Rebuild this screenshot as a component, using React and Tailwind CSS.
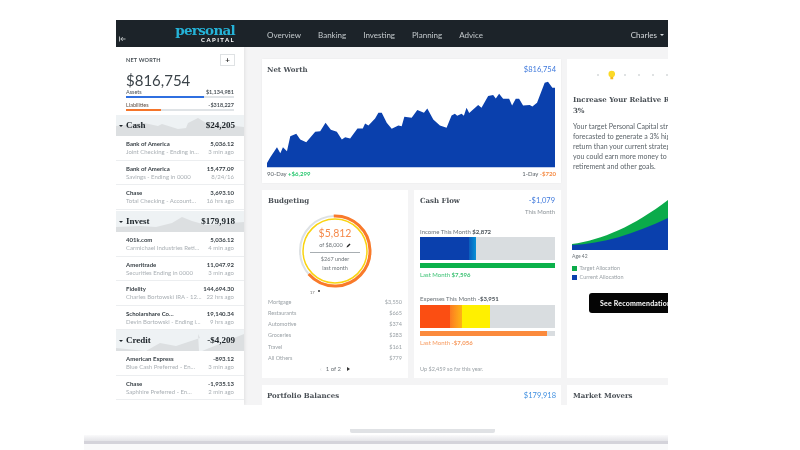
const SANS = { fontFamily: 'Lato, "Open Sans", sans-serif' };
const SLAB = { fontFamily: '"DejaVu Serif", serif' };
const SERIF = { fontFamily: '"Liberation Serif", serif' };

const nwPts = "20,338 20,325 30,308 50,278 60,296 68,278 80,290 90,245 108,238 120,255 138,263 165,232 180,230 196,205 212,226 230,232 245,255 255,248 270,252 292,222 308,222 315,207 325,213 345,192 355,175 365,175 380,205 395,223 415,213 425,215 433,187 455,190 472,167 492,175 502,162 520,195 540,213 560,220 575,183 585,178 592,184 605,178 612,184 620,160 628,176 655,152 665,160 685,125 700,122 708,132 718,118 730,133 748,133 757,153 768,133 778,133 790,153 810,152 818,156 832,145 855,85 865,82 878,100 886,100 886,338";

function Row({ name, sub, amt, when }) {
  return (
    <div className="h-[24.5px] shrink-0 border-b border-[#eceef0] px-[10px] pt-[4px] bg-white">
      <div className="flex justify-between text-[6px] leading-[8px] font-bold text-[#3a4248]">
        <span>{name}</span><span>{amt}</span>
      </div>
      <div className="flex justify-between text-[6px] leading-[8px] text-[#a9afb4]">
        <span>{sub}</span><span>{when}</span>
      </div>
    </div>
  );
}

function Band({ label, amt, points }) {
  return (
    <div className="relative h-[21px] shrink-0 bg-[#eef2f4] flex items-center justify-between pl-[3px] pr-[9px] overflow-hidden">
      <svg className="absolute inset-0 w-full h-full" viewBox="0 0 128 21" preserveAspectRatio="none">
        <polygon points={points} fill="#dcdfe1" />
      </svg>
      <span className="relative flex items-center text-[9px] font-bold text-[#20272c]" style={SERIF}>
        <span className="w-0 h-0 border-l-[2px] border-r-[2px] border-t-[2px] border-l-transparent border-r-transparent border-t-[#20272c] mr-[3px]"></span>
        {label}
      </span>
      <span className="relative text-[9px] font-bold text-[#20272c]" style={SERIF}>{amt}</span>
    </div>
  );
}

function Sidebar() {
  return (
    <div className="w-[128px] shrink-0 bg-white shadow-[1px_0_3px_rgba(0,0,0,0.08)] overflow-hidden flex flex-col">
      <div className="h-[68px] shrink-0 px-[10px] pt-[7px] relative">
        <div className="flex justify-between items-start">
          <span className="text-[5.5px] leading-[12px] font-bold tracking-[0.2px] text-[#4a5258]">NET WORTH</span>
          <span className="w-[15px] h-[12px] border border-[#dfe2e4] flex items-center justify-center text-[8px] leading-none font-bold text-[#333] -mr-[1px]">+</span>
        </div>
        <div className="text-[15px] leading-[18px] mt-[5px] text-[#3b4349]">$816,754</div>
        <div className="flex justify-between text-[5.5px] leading-[7px] text-[#4a5258]">
          <span>Assets</span><span className="font-bold">$1,134,981</span>
        </div>
        <div className="h-[1.5px] bg-[#dfe3e6] mb-[4.5px]"><div className="h-[1.5px] w-[78px] bg-[#2f6fe0]"></div></div>
        <div className="flex justify-between text-[5.5px] leading-[7px] text-[#5a4a40]">
          <span>Liabilities</span><span className="font-bold text-[#4a5258]">-$318,227</span>
        </div>
        <div className="h-[1.5px] bg-[#dfe3e6]"><div className="h-[1.5px] w-[35px] bg-[#f5752a]"></div></div>
      </div>
      <Band label="Cash" amt="$24,205" points="0,21 0,11 28,8 42,11 46,9 62,14 70,13 72,8 82,3 90,8 128,12 128,21" />
      <Row name="Bank of America" sub="Joint Checking - Ending in…" amt="5,036.12" when="3 min ago" />
      <Row name="Bank of America" sub="Savings - Ending in 0000" amt="15,477.09" when="8/24/16" />
      <Row name="Chase" sub="Total Checking - Account…" amt="3,693.10" when="16 hrs ago" />
      <div className="h-[1.5px] shrink-0 bg-white"></div>
      <Band label="Invest" amt="$179,918" points="0,21 0,16 24,15 40,16 56,12 66,6 76,10 90,14 128,11 128,21" />
      <Row name="401k.com" sub="Carmichael Industries Reti…" amt="5,036.12" when="4 min ago" />
      <Row name="Ameritrade" sub="Securities Ending in 0000" amt="11,047.92" when="3 min ago" />
      <Row name="Fidelity" sub="Charles Bortowski IRA - 12…" amt="144,694.30" when="22 hrs ago" />
      <Row name="Scholarshare Co…" sub="Devin Bortowski - Ending i…" amt="19,140.34" when="9 hrs ago" />
      <Band label="Credit" amt="-$4,209" points="0,21 0,18 30,21 44,13 60,16 84,8 82,4 83,21 86,21 128,4 128,21" />
      <Row name="American Express" sub="Blue Cash Preferred - En…" amt="-893.12" when="3 min ago" />
      <Row name="Chase" sub="Saphhire Preferred - En…" amt="-1,935.13" when="2 min ago" />
    </div>
  );
}

function NetWorth() {
  return (
    <div className="h-[124px] shrink-0 bg-white px-[5px] pt-[5px] shadow-[0_0_2px_rgba(0,0,0,0.05)]">
      <div className="flex justify-between items-start">
        <span className="text-[7px] leading-[12px] font-bold text-[#4a5056]" style={SLAB}>Net Worth</span>
        <span className="text-[7.5px] leading-[12px] text-[#3f79dc]">$816,754</span>
      </div>
      <svg className="block w-[288px] h-[87px] mt-[5px]" viewBox="20 80 866 260" preserveAspectRatio="none">
        <polygon points={nwPts} fill="#0a40ad" />
      </svg>
      <div className="flex justify-between text-[6px] leading-[8px] mt-[2px] text-[#5b6369]">
        <span>90-Day <span className="font-bold text-[#28c76f]">+$6,299</span></span>
        <span>1-Day <span className="font-bold text-[#f58a42]">-$720</span></span>
      </div>
    </div>
  );
}

function Ring() {
  const c = 2 * Math.PI;
  return (
    <div className="relative w-[74px] h-[74px] mx-auto">
      <svg className="absolute inset-0" width="74" height="74" viewBox="0 0 74 74">
        <circle cx="37" cy="37" r="35" fill="none" stroke="#dde1e4" strokeWidth="2" />
        <circle cx="37" cy="37" r="35" fill="none" stroke="#f97a2a" strokeWidth="3"
          strokeDasharray={`${c * 35 * 0.64} ${c * 35}`} transform="rotate(-92 37 37)" />
        <circle cx="37" cy="37" r="32" fill="none" stroke="#f9d30f" strokeWidth="1.5" />
      </svg>
      <div className="absolute inset-0 flex flex-col items-center pt-[13px]">
        <span className="text-[10.5px] leading-[13px] text-[#f5894a]">$5,812</span>
        <span className="flex items-center text-[5.5px] leading-[8px] text-[#6c7378] mt-[1px]">
          of $8,000
          <svg className="ml-[3px]" width="5" height="5" viewBox="0 0 5 5"><path d="M0.5 4.5 L1 3 L3.5 0.5 L4.5 1.5 L2 4 Z" fill="#222" /></svg>
        </span>
        <span className="w-[50px] h-[1px] bg-[#a8aeb2] mt-[3px]"></span>
        <span className="text-[5.5px] leading-[9px] text-[#6c7378] mt-[2px] text-center">$267 under<br />last month</span>
      </div>
    </div>
  );
}

function Budgeting() {
  const rows = [["Mortgage", "$3,550"], ["Restaurants", "$665"], ["Automotive", "$374"], ["Groceries", "$283"], ["Travel", "$161"], ["All Others", "$779"]];
  return (
    <div className="w-[146px] h-[188px] bg-white px-[6px] pt-[5px]">
      <div className="text-[7px] leading-[12px] font-bold text-[#4a5056]" style={SLAB}>Budgeting</div>
      <div className="mt-[7px]"><Ring /></div>
      <div className="flex items-center pl-[42px] h-[7px] text-[4px] text-[#666] mt-[1px]">
        <span>17</span><span className="w-[2px] h-[2px] bg-[#333] rounded-full ml-[3px] -mt-[3px]"></span>
      </div>
      <div>
        {rows.map(([a, b]) => (
          <div key={a} className="flex justify-between h-[11.3px] items-center text-[5.5px] text-[#9aa1a6]">
            <span>{a}</span><span>{b}</span>
          </div>
        ))}
      </div>
      <div className="flex justify-center items-center gap-[4px] text-[6px] leading-[10px] text-[#6c7378]">
        <span className="text-[#d0d3d6]">‹</span><span>1 of 2</span>
        <span className="w-0 h-0 border-t-[2px] border-b-[2px] border-l-[3px] border-t-transparent border-b-transparent border-l-[#333] ml-[2px]"></span>
      </div>
    </div>
  );
}

function Bar({ children, bg = "bg-[#d9dde0]" }) {
  return <div className={`flex h-[23px] ${bg}`}>{children}</div>;
}

function CashFlow() {
  return (
    <div className="w-[147px] h-[188px] bg-white pl-[6px] pr-[6px] pt-[5px]">
      <div className="flex justify-between">
        <span className="text-[7px] leading-[12px] font-bold text-[#4a5056]" style={SLAB}>Cash Flow</span>
        <span className="text-[7.5px] leading-[12px] text-[#3f79dc]">-$1,079</span>
      </div>
      <div className="text-right text-[6px] leading-[8px] text-[#8c9398] mt-[1px]">This Month</div>
      <div className="text-[6px] leading-[8px] text-[#6c7378] mt-[12px]">Income This Month <b className="text-[#4a5258]">$2,872</b></div>
      <div className="mt-[1px]">
        <Bar>
          <div className="w-[49px] bg-[#0a40ad]"></div>
          <div className="w-[7px] bg-gradient-to-r from-[#0a5cbc] to-[#0a90d6]"></div>
        </Bar>
      </div>
      <div className="h-[5px] bg-[#0bb14a] mt-[3px]"></div>
      <div className="text-[6px] leading-[8px] text-[#3cc274] mt-[3px]">Last Month <b>$7,596</b></div>
      <div className="text-[6px] leading-[8px] text-[#6c7378] mt-[16px]">Expenses This Month <b className="text-[#4a5258]">-$3,951</b></div>
      <div className="mt-[2px]">
        <Bar>
          <div className="w-[30px] bg-[#fb4e12]"></div>
          <div className="w-[12px] bg-gradient-to-r from-[#fb7a20] to-[#fdb414]"></div>
          <div className="w-[28px] bg-[#fff000]"></div>
        </Bar>
      </div>
      <div className="h-[5px] bg-[#d9dde0] mt-[3px]"><div className="h-[5px] w-[127px] bg-[#fb8a3c]"></div></div>
      <div className="text-[6px] leading-[8px] text-[#f79a5e] mt-[3px]">Last Month <b>-$7,056</b></div>
      <div className="text-[5.5px] leading-[8px] text-[#9aa1a6] mt-[18px]">Up $2,459 so far this year.</div>
    </div>
  );
}

function Advice() {
  return (
    <div className="h-[319px] shrink-0 bg-white pt-[11px] pl-[6px] overflow-hidden whitespace-nowrap">
      <div className="flex items-center h-[10px] pl-[24px] gap-[12px]">
        <span className="w-[2px] h-[2px] rounded-full bg-[#d5d8da]"></span>
        <svg width="8" height="10" viewBox="0 0 8 10" className="-mx-[3px]"><circle cx="4" cy="4" r="3.5" fill="#fbd926" /><rect x="2.5" y="7" width="3" height="2.5" fill="#f5b921" /></svg>
        <span className="w-[2px] h-[2px] rounded-full bg-[#d5d8da]"></span>
        <span className="w-[2px] h-[2px] rounded-full bg-[#d5d8da]"></span>
        <span className="w-[2px] h-[2px] rounded-full bg-[#d5d8da]"></span>
        <span className="w-[2px] h-[2px] rounded-full bg-[#d5d8da]"></span>
      </div>
      <div className="text-[7px] leading-[11px] font-bold text-[#4a5056] mt-[14px]" style={SLAB}>Increase Your Relative Return by<br />3%</div>
      <div className="text-[7px] leading-[10px] text-[#5b6369] mt-[5px]">
        Your target Personal Capital strategy is<br />
        forecasted to generate a 3% higher<br />
        return than your current strategy, so<br />
        you could earn more money to use for<br />
        retirement and other goals.
      </div>
      <svg className="block w-[96px] h-[50px] -ml-[1px] mt-[29px]" viewBox="0 0 96 50" preserveAspectRatio="none">
        <path d="M0 50 L0 44 C30 40 62 26 96 0 L96 50 Z" fill="#0bab4a" />
        <path d="M0 50 L0 45 C30 44 62 34 96 18 L96 50 Z" fill="#0a40ad" />
      </svg>
      <div className="text-[5px] leading-[8px] text-[#6c7378] -ml-[1px] mt-[2px]">Age 42</div>
      <div className="flex items-center text-[5.5px] leading-[9px] text-[#9aa1a6] mt-[4px] -ml-[1px]">
        <span className="w-[4.5px] h-[4.5px] bg-[#0bab4a] mr-[3px]"></span>Target Allocation
      </div>
      <div className="flex items-center text-[5.5px] leading-[9px] text-[#9aa1a6] -ml-[1px]">
        <span className="w-[4.5px] h-[4.5px] bg-[#0a40ad] mr-[3px]"></span>Current Allocation
      </div>
      <div className="mt-[11px] ml-[16px] w-[110px] h-[20px] bg-[#050505] rounded-[3px] flex items-center pl-[11px] text-[7px] font-bold tracking-[0.2px] text-white">
        See Recommendations
      </div>
    </div>
  );
}

export default function App() {
  return (
    <div className="w-[800px] h-[450px] bg-white overflow-hidden blur-[0.35px]" style={SANS}>
      <div className="pt-[20px] pl-[116px]">
        <div className="w-[552px] h-[385px] bg-[#f4f4f5] overflow-hidden flex flex-col">
          <div className="h-[27px] shrink-0 bg-[#1c2329] flex items-stretch">
            <div className="w-[128px] shrink-0 pl-[3px] pr-[9px] flex justify-between">
              <svg width="7" height="6" viewBox="0 0 7 6" className="self-end mb-[5px]"><path d="M0.5 0.5V5.5M6.5 3H1.8M3.8 1L1.8 3L3.8 5" stroke="#d5d9dc" strokeWidth="0.8" fill="none" /></svg>
              <div className="flex flex-col items-end pt-[4px]">
                <span className="text-[13.5px] leading-[13px] font-bold text-[#25b3d8]" style={{ fontFamily: '"DejaVu Serif", serif', letterSpacing: "-0.7px" }}>personal</span>
                <span className="text-[6px] leading-[6px] font-bold tracking-[1.4px] text-white">CAPITAL</span>
              </div>
            </div>
            <div className="flex items-center pl-[23px] pt-[3px] text-[8px] text-[#c4cacd] gap-[17px] flex-1">
              <span>Overview</span><span>Banking</span><span>Investing</span>
              <span>Planning</span><span>Advice</span>
              <span className="ml-auto mr-[4px] flex items-center text-[#d5d9dc]">
                Charles
                <span className="w-0 h-0 border-l-[2px] border-r-[2px] border-t-[2px] border-l-transparent border-r-transparent border-t-[#d5d9dc] ml-[3px]"></span>
              </span>
            </div>
          </div>
          <div className="flex flex-1 min-h-0">
            <Sidebar />
            <div className="flex-1 flex gap-[6px] pl-[18px] pt-[12px] overflow-hidden">
              <div className="w-[299px] shrink-0 flex flex-col gap-[7px]">
                <NetWorth />
                <div className="flex gap-[6px] shrink-0"><Budgeting /><CashFlow /></div>
                <div className="h-[30px] shrink-0 bg-white px-[5px] pt-[5px] flex justify-between">
                  <span className="text-[7px] leading-[12px] font-bold text-[#4a5056]" style={SLAB}>Portfolio Balances</span>
                  <span className="text-[7.5px] leading-[12px] text-[#3f8fe0]">$179,918</span>
                </div>
              </div>
              <div className="w-[101px] shrink-0 flex flex-col gap-[7px]">
                <Advice />
                <div className="h-[30px] shrink-0 bg-white px-[6px] pt-[5px] text-[7px] leading-[12px] font-bold text-[#4a5056]" style={SLAB}>
                  Market Movers
                </div>
              </div>
            </div>
          </div>
        </div>
      </div>
      <div className="relative ml-[84px] w-[584px] mt-[30px]">
        <div className="absolute -top-[6px] left-[266px] w-[145px] h-[4px] bg-[#e0e2e5] rounded-b-[2px]"></div>
        <div className="h-[6px] bg-gradient-to-b from-[#fafafb] to-[#e4e4e8]"></div>
        <div className="h-[3px] bg-[#d4d3da]"></div>
        <div className="h-[6px] bg-[#f9f9fa]"></div>
      </div>
    </div>
  );
}
